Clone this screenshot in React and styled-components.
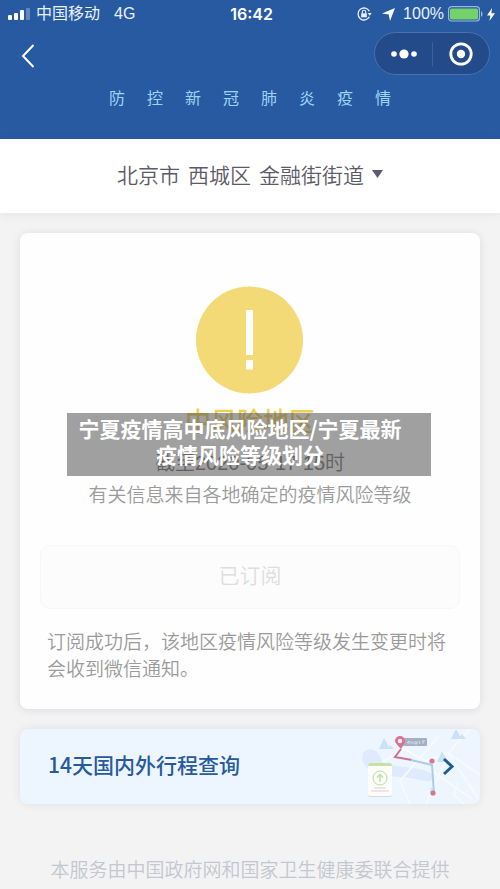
import React from "react";
import styled, { createGlobalStyle } from "styled-components";

const GlobalStyle = createGlobalStyle`
  * {
    box-sizing: border-box;
  }
  body {
    margin: 0;
    background: #f3f3f4;
    font-family: "Noto Sans CJK SC", sans-serif;
    font-weight: 350;
  }
  h1, h2, p {
    margin: 0;
  }
`;

const Header = styled.header`
  background: #285aa2;
  height: 139px;
`;

const StatusBar = styled.div`
  display: grid;
  grid-template-columns: 1fr auto 1fr;
  align-items: center;
  height: 28px;
  padding: 0 5px 0 8px;
  color: #e9f1fb;
  font-family: "Liberation Sans", "Noto Sans CJK SC", sans-serif;
  font-size: 16px;
  font-weight: 400;
  line-height: 28px;
`;

const StatusGroup = styled.div`
  display: flex;
  align-items: center;
  justify-content: ${(props) => (props.$end ? "flex-end" : "flex-start")};
  gap: ${(props) => props.$gap}px;
`;

const Network = styled.span`
  margin-left: 8px;
`;

const StatusIcons = styled.span`
  display: flex;
  align-items: center;
  gap: 10px;
  margin-right: 4px;
`;

const Clock = styled.time`
  color: #fff;
  font-family: Inter, sans-serif;
  font-weight: 600;
`;

const NavBar = styled.nav`
  display: flex;
  justify-content: space-between;
  align-items: center;
  height: 51px;
  padding: 0 10px 0 16px;
`;

const IconButton = styled.button`
  display: flex;
  align-items: center;
  justify-content: center;
  width: ${(props) => props.$width}px;
  height: 40px;
  padding: 0;
  border: 0;
  background: none;
`;

const Capsule = styled.div`
  display: flex;
  align-items: center;
  height: 43px;
  border: 1px solid #4a71b0;
  border-radius: 22px;
  background: #234b8a;
`;

const Divider = styled.span`
  width: 1px;
  height: 24px;
  background: #3b609c;
`;

const Title = styled.h1`
  display: flex;
  justify-content: center;
  gap: 22px;
  color: #9ed3f6;
  font-size: 16px;
  font-weight: 400;
  line-height: 36px;
`;

const LocationBar = styled.button`
  display: flex;
  align-items: center;
  justify-content: center;
  gap: 8px;
  width: 100%;
  height: 74px;
  padding: 0 0 4px;
  border: 0;
  background: #fff;
  box-shadow: 0 2px 10px rgba(0, 0, 0, 0.06);
  color: #5d5a68;
  font: inherit;
  font-size: 21px;
`;

const Main = styled.main`
  display: flex;
  flex-direction: column;
  gap: 20px;
  padding: 20px;
`;

const Card = styled.section`
  display: flex;
  flex-direction: column;
  align-items: center;
  padding: 53px 20px 28px;
  border-radius: 8px;
  background: #fefefe;
  box-shadow: 0 1px 8px rgba(60, 60, 110, 0.12);
`;

const RiskArea = styled.div`
  position: relative;
  display: flex;
  flex-direction: column;
  align-items: center;
  width: 100%;
`;

const Level = styled.h2`
  margin-top: 8px;
  color: #efd04f;
  font-size: 26px;
  font-weight: 500;
  line-height: 36px;
`;

const Deadline = styled.p`
  margin-top: 10px;
  color: #77777a;
  font-family: "Liberation Sans", "Noto Sans CJK SC", sans-serif;
  font-size: 20px;
  line-height: 30px;
`;

const Source = styled.p`
  margin-top: 2px;
  color: #9b9b9b;
  font-size: 19px;
  line-height: 28px;
  white-space: nowrap;
`;

const Caption = styled.div`
  position: absolute;
  top: 127px;
  left: 27px;
  right: 29px;
  padding: 2px 18px 9px 0;
  background: rgba(80, 80, 80, 0.54);
  color: #fff;
  font-size: 21px;
  font-weight: 700;
  line-height: 26px;
  text-align: center;
`;

const Subscribed = styled.button`
  width: 100%;
  height: 64px;
  margin-top: 37px;
  padding: 0 0 6px;
  border: 1px solid #f7f7f7;
  border-radius: 10px;
  background: #fcfcfc;
  color: #dedede;
  font: inherit;
  font-size: 21px;
`;

const Note = styled.p`
  width: 100%;
  margin-top: 18px;
  padding-left: 7px;
  color: #9b9b9b;
  font-size: 19px;
  line-height: 27px;
`;

const TravelLink = styled.a`
  display: flex;
  align-items: center;
  justify-content: space-between;
  height: 75px;
  padding-left: 28px;
  border-radius: 8px;
  overflow: hidden;
  background: #edf6fe;
  box-shadow: 0 0 8px rgba(60, 60, 110, 0.1);
  color: #285a9c;
  font-size: 21px;
  font-weight: 500;
  text-decoration: none;
`;

const TravelTitle = styled.span`
  padding-bottom: 5px;
`;

const Footer = styled.footer`
  padding: 30px 0 4px;
  color: #c3c7d0;
  font-size: 19px;
  line-height: 30px;
  text-align: center;
  white-space: nowrap;
`;

const SignalIcon = () => (
  <svg width="22" height="12" viewBox="0 0 22 12">
    <rect x="0" y="7" width="4" height="5" rx="1" fill="#fff" />
    <rect x="6" y="5" width="4" height="7" rx="1" fill="#fff" />
    <rect x="12" y="2" width="4" height="10" rx="1" fill="#fff" />
    <rect x="18" y="0" width="4" height="12" rx="1" fill="#6288be" />
  </svg>
);

const LockIcon = () => (
  <svg width="15" height="14" viewBox="0 0 15 14" fill="none" stroke="#e9f1fb">
    <path d="M12.400 4.200A6 6 0 1 0 12.400 9.800" strokeWidth="1.3" />
    <path d="M10.700 6h4l-2 2.800z" fill="#e9f1fb" stroke="none" />
    <rect x="4.2" y="6.3" width="5.6" height="4" fill="#e9f1fb" stroke="none" />
    <path d="M5.300 6.500V5a1.700 1.700 0 0 1 3.400 0v1.500" strokeWidth="1.1" />
  </svg>
);

const ArrowIcon = () => (
  <svg width="13" height="13" viewBox="0 0 13 13">
    <path d="M13 0L8 13L6.700 6.600L0 5.600Z" fill="#fff" />
  </svg>
);

const BatteryIcon = () => (
  <svg width="35" height="16" viewBox="0 0 35 16">
    <rect x="0.6" y="0.6" width="30.8" height="14.4" rx="3" fill="none" stroke="#9db7dc" strokeWidth="1.2" />
    <rect x="2" y="2.4" width="28" height="11" rx="1.5" fill="#73d26b" />
    <path d="M33 5v6q1.600-1 1.600-3T33 5z" fill="#9db7dc" />
  </svg>
);

const BoltIcon = () => (
  <svg width="8" height="13" viewBox="0 0 8 13">
    <path d="M5 0L0 7.400H3.400L2.400 13L8 5.200H4.400Z" fill="#fff" />
  </svg>
);

const MapArt = () => (
  <svg width="120" height="75" viewBox="0 0 120 75" fill="none">
    <path d="M3 24C10 16 20 22 22 33C38 40 60 37 70 44C78 50 72 54 60 51C45 47 28 48 18 45C6 40 0 34 3 24Z" fill="#dfeafc" />
    <g stroke="#f7fbff" strokeWidth="1.6">
      <path d="M22 33L44 20L66 32L88 24L120 46" />
      <path d="M50 75L40 52L78 8" />
      <path d="M66 75L90 22L110 0" />
      <path d="M88 24L120 72" />
      <path d="M72 42L112 70" />
      <path d="M98 54L94 66L104 75" />
    </g>
    <g fill="#c9e2fa">
      <path d="M24 9L30 20H19Z" />
      <path d="M30 16L34 20H27Z" />
      <path d="M96 0L102 10H91Z" />
      <path d="M102 5L106 10H99Z" />
      <path d="M82 22L88 33H77Z" />
      <path d="M71 58L75 63H70Z" />
    </g>
    <path d="M41 20L35 28L52 31" stroke="#d0718f" strokeWidth="2" />
    <path d="M51 31L72 36L74 65" stroke="#a9cde9" strokeWidth="2" />
    <rect x="43" y="9" width="24" height="8" rx="1" fill="#a4b0c3" />
    <path d="M47 14l2-2v3m2-3v2h3m1-2v3h2v-3m2 0l1 3m2-3h3m-2 0v3" stroke="#e4eaf3" strokeWidth="0.8" />
    <path d="M41 20Q35 14 35 12A5 5 0 0 1 45 12Q45 14 41 20Z" fill="#d9738f" />
    <circle cx="40" cy="12" r="2.2" fill="#f9eef3" />
    <circle cx="72" cy="32" r="2.6" fill="#d9738f" />
    <circle cx="73" cy="64" r="2.6" fill="#d9738f" />
    <rect x="8" y="35" width="24" height="33" rx="2" fill="#d5dce4" />
    <rect x="8" y="34" width="24" height="33" rx="2" fill="#fbfdf9" />
    <path d="M8 37Q8 34 10 34H30Q32 34 32 37Z" fill="#c6e3a5" />
    <circle cx="20" cy="49" r="7" stroke="#bfdd9a" />
    <path d="M20 53V46M17 48.500L20 45.500L23 48.500" stroke="#bfdd9a" strokeWidth="1.3" />
    <path d="M14 59H26" stroke="#cbc5dc" strokeWidth="0.8" />
    <path d="M11 62H29" stroke="#e3bccb" strokeWidth="0.8" />
    <path d="M84 30L92 37.500L84 45" stroke="#245c8c" strokeWidth="3" />
  </svg>
);

const App = () => {
  return (
    <>
      <GlobalStyle />
      <Header>
        <StatusBar>
          <StatusGroup $gap={6}>
            <SignalIcon />
            <span>中国移动</span>
            <Network>4G</Network>
          </StatusGroup>
          <Clock>16:42</Clock>
          <StatusGroup $gap={4} $end>
            <StatusIcons>
              <LockIcon />
              <ArrowIcon />
            </StatusIcons>
            <span>100%</span>
            <BatteryIcon />
            <BoltIcon />
          </StatusGroup>
        </StatusBar>
        <NavBar>
          <IconButton $width={24} aria-label="返回">
            <svg width="14" height="28" viewBox="0 0 14 28" fill="none">
              <path d="M12.500 5L2 16L12.500 27" stroke="#fff" strokeWidth="2" />
            </svg>
          </IconButton>
          <Capsule>
            <IconButton $width={57} aria-label="更多">
              <svg width="26" height="10" viewBox="0 0 26 10" fill="#fff">
                <circle cx="3" cy="5" r="2.800" />
                <circle cx="13" cy="5" r="4.600" />
                <circle cx="23" cy="5" r="2.800" />
              </svg>
            </IconButton>
            <Divider />
            <IconButton $width={56} aria-label="关闭">
              <svg width="24" height="24" viewBox="0 0 24 24" fill="none">
                <circle cx="12" cy="12" r="10.200" stroke="#fff" strokeWidth="2.800" />
                <circle cx="12" cy="12" r="4.200" fill="#fff" />
              </svg>
            </IconButton>
          </Capsule>
        </NavBar>
        <Title>
          {[..."防控新冠肺炎疫情"].map((char) => (
            <span key={char}>{char}</span>
          ))}
        </Title>
      </Header>
      <LocationBar>
        <span>北京市</span>
        <span>西城区</span>
        <span>金融街街道</span>
        <svg width="11" height="8" viewBox="0 0 11 8">
          <path d="M0 0H11L5.500 8Z" fill="#5d5a78" />
        </svg>
      </LocationBar>
      <Main>
        <Card>
          <RiskArea>
            <svg width="108" height="108" viewBox="0 0 108 108">
              <circle cx="53.500" cy="54" r="53.500" fill="#f4da77" />
              <path d="M50 24h7v45h-7zM50 74h7v9.500h-7z" fill="#fff" />
            </svg>
            <Level>中风险地区</Level>
            <Deadline>截至2020-05-17 15时</Deadline>
            <Source>有关信息来自各地确定的疫情风险等级</Source>
            <Caption>
              宁夏疫情高中底风险地区/宁夏最新
              <br />
              疫情风险等级划分
            </Caption>
          </RiskArea>
          <Subscribed>已订阅</Subscribed>
          <Note>订阅成功后，该地区疫情风险等级发生变更时将会收到微信通知。</Note>
        </Card>
        <TravelLink href="#travel">
          <TravelTitle>14天国内外行程查询</TravelTitle>
          <MapArt />
        </TravelLink>
      </Main>
      <Footer>本服务由中国政府网和国家卫生健康委联合提供</Footer>
    </>
  );
};

export default App;
